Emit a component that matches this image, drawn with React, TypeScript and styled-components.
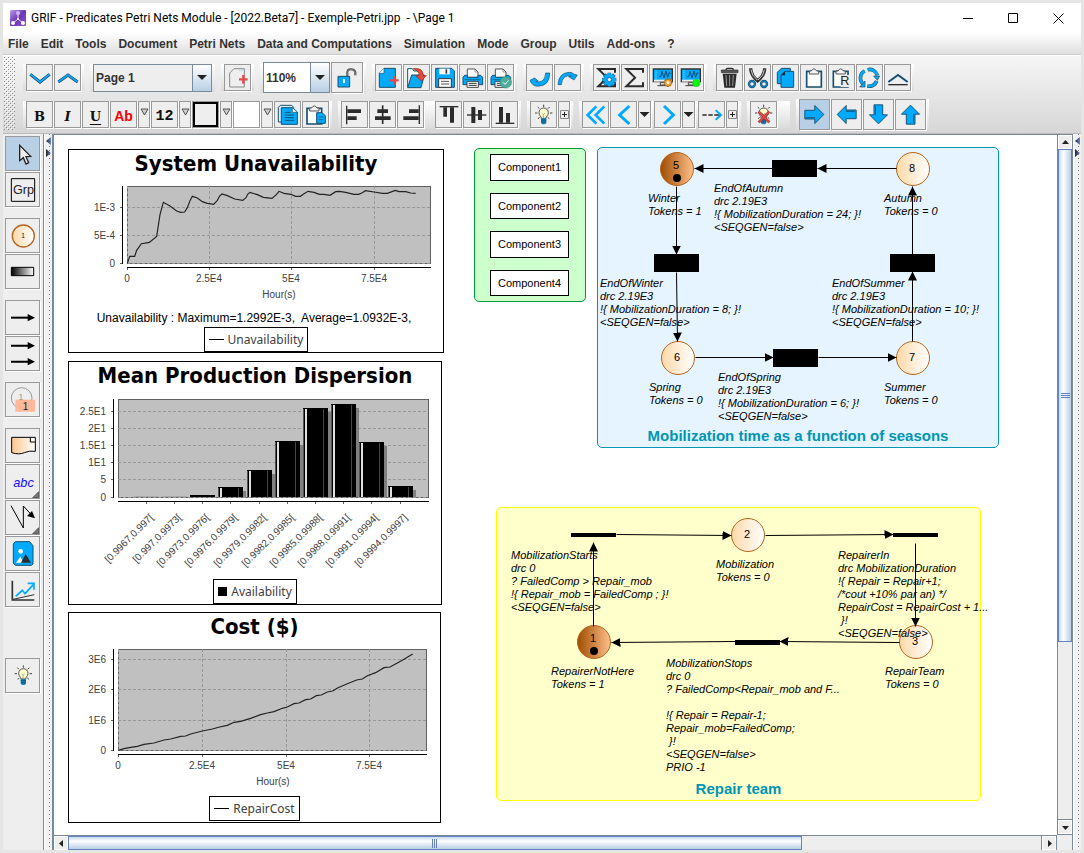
import React from "react";
import styled, { createGlobalStyle } from "styled-components";

const SANS = `"Liberation Sans", Arial, sans-serif`;
const BLUE = "#00aaff";
const INK = "#2b2b2b";
const NAVY = "#17506e";

const GlobalStyle = createGlobalStyle`
  *, *::before, *::after { box-sizing: border-box; }
  body { margin: 0; font-family: ${SANS}; font-size: 12px; color: #333; }
  button, select, input { font: inherit; color: inherit; }
  h1, h2, p { margin: 0; }
`;

/* ---------- window frame ---------- */

const Frame = styled.div`
  display: flex;
  flex-direction: column;
  height: 100vh;
  min-height: 600px;
  border: 3px solid #e5e5e5;
  background: #eee;
  overflow: hidden;
`;

const TitleBar = styled.header`
  display: flex;
  align-items: center;
  gap: 4px;
  height: 30px;
  padding-left: 7px;
  background: #fff;
  color: #000;
`;

const WindowTitle = styled.h1`
  flex: 1;
  font: 12px Roboto, "Noto Sans", sans-serif;
  white-space: pre;
`;

const WindowButtons = styled.div`
  display: flex;
`;

const WindowButton = styled.button`
  display: grid;
  place-items: center;
  width: 45px;
  height: 28px;
  padding: 0;
  border: 0;
  background: none;
`;

const MenuBar = styled.nav`
  display: flex;
  align-items: center;
  gap: 12px;
  height: 22px;
  padding: 0 5px;
  background: linear-gradient(#fff, #dedede);
  border-bottom: 1px solid #ccc;
`;

const MenuItem = styled.button`
  padding: 0;
  border: 0;
  background: none;
  font-weight: bold;
  white-space: nowrap;
`;

/* ---------- toolbars ---------- */

const ToolArea = styled.section`
  display: flex;
  gap: 8px;
  height: 79px;
  padding: 1px 0 3px 1px;
  background: linear-gradient(#f6f6f6, #d6d6d6);
  border-top: 1px solid #fff;
  border-bottom: 1px solid #bbb;
`;

const GripSvg = styled.svg`
  flex: none;
  width: 11px;
  height: 100%;
`;

const Grip = () => (
  <GripSvg aria-hidden="true">
    <pattern id="grip" width="4" height="4" patternUnits="userSpaceOnUse">
      <path d="M0 0h1v1H0zM2 2h1v1H2z" fill="#8b8b8b" />
      <path d="M1 1h1v1H1zM3 3h1v1H3z" fill="#fff" />
    </pattern>
    <rect width="100%" height="100%" fill="url(#grip)" />
  </GripSvg>
);

const ToolRows = styled.div`
  display: flex;
  flex-direction: column;
  gap: 6px;
  padding-top: 5px;
`;

const ToolRow = styled.div`
  display: flex;
  align-items: center;
  gap: 6px;
  height: 31px;
`;

const Group = styled.div<{ $tail?: number }>`
  display: flex;
  align-items: center;
  gap: 1px;
  padding: 0 ${(p) => p.$tail ?? 3}px 0 3px;
  background: linear-gradient(#fff, #dcdcdc);
`;

const Space = styled.span<{ $w: number }>`
  width: ${(p) => p.$w}px;
`;

const ToolButton = styled.button<{ $w?: number; $h?: number; $on?: boolean }>`
  display: grid;
  place-items: center;
  flex: none;
  width: ${(p) => p.$w ?? 27}px;
  height: ${(p) => p.$h ?? 27}px;
  padding: 0;
  overflow: hidden;
  border: 1px solid #999;
  background: ${(p) => (p.$on ? "#b8cfe5" : "#eee")};
  box-shadow: 1px 1px 0 #fff;
`;

const Letter = styled.span<{ $kind?: "serif" | "i" | "u" | "red" }>`
  padding-top: 3px;
  font: bold 15px "Liberation Mono", monospace;
  color: #111;
  ${(p) => p.$kind && p.$kind !== "red" && `font: bold 13px "DejaVu Serif", serif;`}
  ${(p) => p.$kind === "i" && "font-style: italic;"}
  ${(p) => p.$kind === "u" && "text-decoration: underline; text-underline-offset: 3px;"}
  ${(p) => p.$kind === "red" && `color: #f00; font-family: ${SANS}; font-size: 14px;`}
`;

const Swatch = styled.span<{ $outlined?: boolean }>`
  width: 25px;
  height: 25px;
  background: ${(p) => (p.$outlined ? "#eee" : "#fff")};
  border: ${(p) => (p.$outlined ? "2px solid #000" : "0")};
`;

const Combo = styled.div<{ $w: number; $h: number; $white?: boolean }>`
  display: flex;
  width: ${(p) => p.$w}px;
  height: ${(p) => p.$h}px;
  border: 1px solid #7a8a99;
  background: ${(p) => (p.$white ? "#fff" : "#eee")};
`;

const ComboSelect = styled.select`
  flex: 1;
  min-width: 0;
  padding: 0 2px;
  border: 0;
  appearance: none;
  background: none;
  font-weight: bold;
`;

const ComboInput = styled.input`
  flex: 1;
  min-width: 0;
  padding: 0 2px;
  border: 0;
  background: none;
  font-weight: bold;
`;

const ComboArrow = styled.span`
  display: grid;
  place-items: center;
  width: 19px;
  border-left: 1px solid #7a8a99;
  background: linear-gradient(#fff, #b8cfe5);
  pointer-events: none;
`;

const Triangle = styled.span`
  width: 10px;
  height: 5px;
  clip-path: polygon(0 0, 100% 0, 50% 100%);
  background: #222;
`;

const LightDrop = styled(ToolButton)`
  padding-bottom: 6px;
`;

/* ---------- workspace ---------- */

const Workspace = styled.main`
  display: flex;
  flex: 1;
  min-height: 0;
`;

const Palette = styled.aside`
  display: flex;
  flex-direction: column;
  gap: 11px;
  width: 41px;
  padding: 2px 0 0 2px;
  border-right: 1px solid #7a8a99;
`;

const PaletteGroup = styled.div<{ $apart?: boolean }>`
  display: flex;
  flex-direction: column;
  gap: 1px;
  margin-top: ${(p) => (p.$apart ? 40 : 0)}px;
`;

const Divider = styled.div`
  display: flex;
  flex-direction: column;
  align-items: center;
  gap: 4px;
  width: 8px;
  padding-top: 3px;
  background-color: #f2f2f2;
  background-image: linear-gradient(transparent 1px, #f2f2f2 1px),
    linear-gradient(90deg, transparent 4px, #777 4px, #777 5px, transparent 5px);
  background-size: 8px 4px;
  border-left: 1px solid #fff;
`;

const DividerArrow = styled.button<{ $right?: boolean }>`
  width: 5px;
  height: 8px;
  padding: 0;
  border: 0;
  background: linear-gradient(90deg, #222, #6b87d6);
  clip-path: ${(p) => (p.$right ? "polygon(0 0, 100% 50%, 0 100%)" : "polygon(100% 0, 0 50%, 100% 100%)")};
`;

const ScrollPane = styled.section`
  display: grid;
  grid-template: minmax(0, 1fr) 15px / minmax(0, 1fr) 15px;
  flex: 1;
  min-width: 0;
  border: solid #7a8a99;
  border-width: 1px 1px 0 2px;
`;

const Canvas = styled.div`
  position: relative;
  overflow: hidden;
  background: #fff;
  color: #000;
`;

const ScrollBar = styled.div<{ $vertical?: boolean }>`
  display: flex;
  flex-direction: ${(p) => (p.$vertical ? "column" : "row")};
  border: solid #7a8a99;
  border-width: ${(p) => (p.$vertical ? "0 0 1px 1px" : "1px 1px 0 0")};
  background: #eee;
`;

const ScrollButton = styled.button`
  display: grid;
  place-items: center;
  flex: none;
  width: 14px;
  height: 14px;
  padding: 0;
  border: 1px solid #fff;
  background: #eee;
`;

const ScrollTrack = styled.div<{ $vertical?: boolean }>`
  display: flex;
  flex-direction: ${(p) => (p.$vertical ? "column" : "row")};
  flex: 1;
  border: solid #7a8a99;
  border-width: ${(p) => (p.$vertical ? "0 0 1px" : "0 1px 0 0")};
`;

const Thumb = styled.div<{ $vertical?: boolean; $shown: number; $total: number }>`
  display: grid;
  place-items: center;
  flex: 0 0 calc(100% * ${(p) => p.$shown} / ${(p) => p.$total});
  border: 1px solid #6382bf;
  background: linear-gradient(${(p) => (p.$vertical ? "90deg" : "180deg")}, #c6d9ec, #fff 35%, #b8cfe5);
`;

const Corner = styled.div`
  background: #eee;
`;

/* ---------- things placed on the canvas ---------- */

type Spot = { $x: number; $y: number };

const ChartPanel = styled.figure<Spot & { $w: number }>`
  position: absolute;
  left: ${(p) => p.$x}px;
  top: ${(p) => p.$y}px;
  width: ${(p) => p.$w}px;
  display: flex;
  flex-direction: column;
  align-items: center;
  margin: 0;
  border: 1px solid #000;
  background: #fff;
`;

const ChartTitle = styled.h2`
  font: bold 22px/28px "DejaVu Sans Condensed", "Noto Sans", sans-serif;
`;

const ChartSvg = styled.svg`
  display: block;
  width: 100%;
  font-family: ${SANS};
  font-size: 10px;
  fill: #404040;
`;

const ChartNote = styled.p`
  padding-right: 4px;
  font-size: 12px;
  line-height: 17px;
  white-space: pre;
`;

const Legend = styled.figcaption<{ $lift?: boolean }>`
  display: flex;
  align-items: center;
  gap: 4px;
  height: 25px;
  padding: 0 4px;
  margin-bottom: ${(p) => (p.$lift ? 1 : 0)}px;
  border: 1px solid #000;
  font: 12px "Noto Sans", sans-serif;
  color: #404040;
`;

const LegendLine = styled.span`
  width: 15px;
  height: 1px;
  background: #000;
`;

const LegendSquare = styled.span`
  width: 9px;
  height: 9px;
  background: #000;
`;

const Zone = styled.div<Spot & { $w: number; $h: number; $fill: string; $line: string }>`
  position: absolute;
  left: ${(p) => p.$x}px;
  top: ${(p) => p.$y}px;
  width: ${(p) => p.$w}px;
  height: ${(p) => p.$h}px;
  display: flex;
  flex-direction: column;
  align-items: center;
  justify-content: flex-end;
  border: 1px solid ${(p) => p.$line};
  border-radius: 5px;
  background: ${(p) => p.$fill};
`;

const ComponentList = styled(Zone)`
  align-items: flex-start;
  justify-content: flex-start;
  gap: 12px;
  padding: 5px 15px;
`;

const ZoneTitle = styled.h2`
  font: bold 15px/22px ${SANS};
  color: #0096b4;
  white-space: nowrap;
`;

const ComponentBox = styled.div`
  display: grid;
  place-items: center;
  width: 79px;
  height: 27px;
  border: 1px solid #000;
  background: #fff;
  font-size: 11px;
`;

const NetSvg = styled.svg`
  position: absolute;
  inset: 0;
  width: 100%;
  height: 100%;
  font-family: ${SANS};
  font-size: 11px;
`;

const Caption = styled.div<Spot>`
  position: absolute;
  left: ${(p) => p.$x}px;
  top: ${(p) => p.$y}px;
  font-size: 11px;
  font-style: italic;
  line-height: 13px;
  white-space: pre;
`;

/* ---------- icons ---------- */

const Icon = ({ size = 25, children }: { size?: number; children: React.ReactNode }) => (
  <svg width={size} height={size} viewBox={`3 3 ${size * 3} ${size * 3}`} fill="none" aria-hidden="true">
    {children}
  </svg>
);

const chevron = (d: string) => (
  <Icon>
    <path d={d} stroke="#333" strokeWidth="9" />
    <path d={d} stroke={BLUE} strokeWidth="6" />
  </Icon>
);
const Plus = ({ x, y }: { x: number; y: number }) => (
  <path d={`M${x} ${y - 13}V${y + 13}M${x - 13} ${y}H${x + 13}`} stroke="#e5484d" strokeWidth="7" />
);
const Board = ({ x = 0 }: { x?: number }) => (
  <g transform={`translate(${x} 0)`}>
    <path d="M20 22h44v47H20z" fill="#fff" stroke={NAVY} strokeWidth="5" />
    <path d="M28 30v-9h6q8-13 16 0h6v9z" fill="#f4f4f4" stroke="#555" strokeWidth="3" />
  </g>
);
const Bulb = ({ dx = 0, dy = 0 }: { dx?: number; dy?: number }) => (
  <g transform={`translate(${dx} ${dy})`}>
    <path d="M41 11v7M23 18l5 5M59 18l-5 5M15 36h7M60 36h7M24 53l5-4M58 53l-5-4" stroke="#444" strokeWidth="3" />
    <path d="M34 52c0-7-7-8-7-17a14 14 0 0 1 28 0c0 9-7 10-7 17z" fill="#ffffcc" stroke="#555" strokeWidth="3" />
    <path d="M36 37l4 4 5-4M40 41v10" stroke="#886" strokeWidth="2" />
    <path d="M33 52h16v14l-4 4h-8l-4-4z" fill="#1784b5" />
    <path d="M33 57h16M34 63h14" stroke="#0a3d5c" strokeWidth="2" />
  </g>
);
const Printer = () => (
  <>
    <path d="M25 15h23l9 9v16H25z" fill="#fff" stroke="#555" strokeWidth="3" />
    <path d="M48 15v9h9" stroke="#666" strokeWidth="2" />
    <path d="M17 34h8v6h32v-6h8l6 6v22H12V40z" fill={BLUE} stroke={NAVY} strokeWidth="3" />
    <path d="M17 47h48" stroke={NAVY} strokeWidth="2" />
    <path d="M24 52h34v18H24z" fill="#fff" stroke="#444" strokeWidth="3" />
    <path d="M29 58h24M29 64h24" stroke="#333" strokeWidth="3" />
  </>
);
const Screen = () => (
  <>
    <path d="M13 15h57v38H13z" fill={BLUE} stroke="#333" strokeWidth="4" />
    <path d="M15 47h53v6H15z" fill="#eee" />
    <path d="M21 19v26" stroke="#fff" strokeWidth="2" strokeDasharray="3 3" />
    <path d="M30 38h5l4-16 6 20 6-21 5 19 5-15 3 5" stroke="#0b4c74" strokeWidth="3" />
    <path d="M34 55h15v8H34zM25 65h30" fill="#ddd" stroke="#444" strokeWidth="3" />
  </>
);
const sigma = "M66 26V15H16L42 41 16 67H66V55";
const gearRays = (cx: number, cy: number, r: number) =>
  [0, 45, 90, 135].map((a) => {
    const c = Math.round(Math.cos((a * Math.PI) / 180) * r);
    const s = Math.round(Math.sin((a * Math.PI) / 180) * r);
    return `M${cx - c} ${cy - s}L${cx + c} ${cy + s}`;
  }).join("");

const icons = {
  down: chevron("M13 31L42 54 71 31"),
  up: chevron("M13 54L42 33 71 54"),
  addPage: (
    <Icon>
      <path d="M30 14h31v55H17V27z" fill="#eee" stroke="#888" strokeWidth="3" />
      <path d="M45 19h16" stroke="#9cdcff" strokeWidth="3" strokeDasharray="5 2" />
      <Plus x={58} y={46} />
    </Icon>
  ),
  lock: (
    <Icon size={29}>
      <path d="M46 44V32q0-10 11-10t13 9v9" stroke="#444" strokeWidth="6" />
      <path d="M46 44V32q0-10 11-10t13 9v9" stroke="#999" strokeWidth="2" />
      <path d="M18 43h35v32H18z" fill={BLUE} stroke={NAVY} strokeWidth="3" />
      <path d="M36 52v11" stroke="#fff" strokeWidth="6" />
    </Icon>
  ),
  newDoc: (
    <Icon>
      <path d="M27 13h34v57H13V28z" fill={BLUE} stroke={NAVY} strokeWidth="3" />
      <path d="M13 28h14V13" fill="#fff" stroke={NAVY} strokeWidth="2" />
      <Plus x={58} y={49} />
    </Icon>
  ),
  open: (
    <Icon>
      <path d="M14 70V14h14l5 7h19v12" fill="#fff" stroke={NAVY} strokeWidth="3" />
      <path d="M14 71l12-38h38L54 71z" fill={BLUE} stroke={NAVY} strokeWidth="3" />
      <path d="M31 14q31-4 29 21h10L55 51 38 35h10q2-14-17-21z" fill="#e8493c" stroke="#8c2a22" strokeWidth="2" />
    </Icon>
  ),
  save: (
    <Icon>
      <path d="M14 13h48l8 8v49H14z" fill={BLUE} stroke={NAVY} strokeWidth="3" />
      <path d="M25 14h31v17H25z" fill="#fff" />
      <path d="M46 16v13" stroke="#333" strokeWidth="5" />
      <path d="M23 44h38v26H23z" fill="#fff" stroke="#333" strokeWidth="3" />
      <path d="M30 52h24M30 60h24" stroke="#555" strokeWidth="3" />
    </Icon>
  ),
  print: <Icon><Printer /></Icon>,
  printCheck: (
    <Icon>
      <Printer />
      <circle cx="56" cy="55" r="17" fill="#4fae9a" stroke="#397" strokeWidth="2" />
      <path d="M48 55l6 6 11-12" stroke="#fff" strokeWidth="3" />
    </Icon>
  ),
  undo: (
    <Icon>
      <path d="M12 49l14-7 11 9-8 2q28 6 30-26h12q0 40-37 40-16-1-22-18z" fill={BLUE} stroke={NAVY} strokeWidth="2" />
    </Icon>
  ),
  redo: (
    <Icon>
      <path d="M12 62q2-36 35-37 8 0 13 6l10 2-10 15-16-10 8-2q-27-5-30 26z" fill={BLUE} stroke={NAVY} strokeWidth="2" />
    </Icon>
  ),
  sigmaGear: (
    <Icon>
      <path d={sigma} stroke={INK} strokeWidth="6" />
      <path d={gearRays(49, 47, 21)} stroke={NAVY} strokeWidth="11" />
      <circle cx="49" cy="47" r="16" fill={BLUE} />
      <path d={gearRays(49, 47, 20)} stroke={BLUE} strokeWidth="8" />
      <circle cx="49" cy="47" r="6" fill="#fff" stroke={NAVY} strokeWidth="2" />
    </Icon>
  ),
  sigma: (
    <Icon>
      <path d={sigma} stroke={INK} strokeWidth="6" />
    </Icon>
  ),
  screenGear: (
    <Icon>
      <Screen />
      <path d={gearRays(57, 56, 13)} stroke="#a66d1a" strokeWidth="7" />
      <circle cx="57" cy="56" r="9" fill="#f3a53a" />
      <circle cx="57" cy="56" r="4" fill="#fff" />
    </Icon>
  ),
  screenRun: (
    <Icon>
      <Screen />
      <circle cx="58" cy="57" r="11" fill="#0f0" stroke="#2bbb2b" strokeWidth="2" />
    </Icon>
  ),
  trash: (
    <Icon>
      <path d="M30 18q0-5 5-5h12q5 0 5 5" stroke={INK} strokeWidth="4" />
      <path d="M16 18h50v8H16z" fill="#555" stroke={INK} strokeWidth="2" />
      <path d="M20 29h42l-5 42H25z" fill={INK} />
      <path d="M30 33l2 33M41 33v33M52 33l-2 33" stroke="#999" strokeWidth="3" />
    </Icon>
  ),
  cut: (
    <Icon>
      <path d="M20 13q0 22 24 40M62 13q0 22-24 40" stroke="#333" strokeWidth="10" />
      <path d="M21 17q1 17 19 31M61 17q-1 17-19 31" stroke="#ccc" strokeWidth="3" />
      <circle cx="24" cy="60" r="9" stroke={NAVY} strokeWidth="7" />
      <circle cx="60" cy="60" r="9" stroke={NAVY} strokeWidth="7" />
      <circle cx="24" cy="60" r="9" stroke={BLUE} strokeWidth="2" />
      <circle cx="60" cy="60" r="9" stroke={BLUE} strokeWidth="2" />
    </Icon>
  ),
  copy: (
    <Icon>
      <path d="M28 13h27v46H16V25z" fill={BLUE} stroke={NAVY} strokeWidth="3" />
      <path d="M39 22h26v48H27V34z" fill={BLUE} stroke={NAVY} strokeWidth="3" />
      <path d="M27 34h12V22" fill={INK} />
    </Icon>
  ),
  paste: <Icon><Board /></Icon>,
  pasteR: (
    <Icon>
      <Board x={-4} />
      <path d="M38 33h28v36H38z" fill="#eee" />
      <text x="37" y="64" fontSize="38" fill="#222" fontFamily="Liberation Sans">R</text>
    </Icon>
  ),
  cycle: (
    <Icon>
      <path d="M24 62A24 24 0 0 1 26 21M35 17A24 24 0 0 1 64 34M62 51A24 24 0 0 1 34 66" stroke="#245" strokeWidth="11" />
      <path d="M24 62A24 24 0 0 1 26 21M35 17A24 24 0 0 1 64 34M62 51A24 24 0 0 1 34 66" stroke={BLUE} strokeWidth="8" />
      <path d="M27 51v18H11zM53 36h18l-7 13z" fill={BLUE} stroke="#245" strokeWidth="2" />
    </Icon>
  ),
  collapse: (
    <Icon>
      <path d="M13 54L42 33 71 54" stroke={NAVY} strokeWidth="6" />
      <path d="M13 62h58" stroke={INK} strokeWidth="4" />
    </Icon>
  ),
  copyDoc: (
    <Icon>
      <path d="M19 13h34l6 6v44H13V19z" fill="#d8f0ff" stroke={NAVY} strokeWidth="3" />
      <path d="M22 20h34l14 13v37H22z" fill={BLUE} stroke={NAVY} strokeWidth="3" />
      <path d="M55 21v13h14" fill="#fff" stroke={NAVY} strokeWidth="2" />
      <path d="M32 34h18M32 42h28M32 50h28M32 58h28" stroke={NAVY} strokeWidth="3" />
    </Icon>
  ),
  pasteDoc: (
    <Icon>
      <Board x={-5} />
      <path d="M44 35h16l10 9v23H44z" fill={BLUE} stroke={NAVY} strokeWidth="3" />
      <path d="M50 48h14M50 56h14" stroke={NAVY} strokeWidth="2" />
    </Icon>
  ),
  left: <Icon><path d="M17 14v56" stroke={INK} strokeWidth="4" /><path d="M19 25h41v11H19zM19 46h28v11H19z" fill={INK} /></Icon>,
  center: <Icon><path d="M41 13v56" stroke={INK} strokeWidth="5" /><path d="M25 25h32v11H25zM18 46h47v11H18z" fill={INK} /></Icon>,
  right: <Icon><path d="M67 13v56" stroke={INK} strokeWidth="4" /><path d="M36 25h29v11H36zM19 46h46v11H19z" fill={INK} /></Icon>,
  top: <Icon><path d="M14 17h56" stroke={INK} strokeWidth="4" /><path d="M25 19h11v28H25zM45 19h12v46H45z" fill={INK} /></Icon>,
  middle: <Icon><path d="M12 42h58" stroke={INK} strokeWidth="4" /><path d="M25 18h12v48H25zM45 27h12v30H45z" fill={INK} /></Icon>,
  bottom: <Icon><path d="M14 67h56" stroke={INK} strokeWidth="4" /><path d="M24 18h12v47H24zM45 36h12v29H45z" fill={INK} /></Icon>,
  bulb: <Icon><Bulb /></Icon>,
  bulbOff: (
    <Icon>
      <Bulb />
      <path d="M26 32l32 32M58 32L26 64" stroke="#8c2a22" strokeWidth="8" />
      <path d="M26 32l32 32M58 32L26 64" stroke="#ee4444" strokeWidth="5" />
    </Icon>
  ),
  first: <Icon><path d="M43 16L17 42l26 26M67 16L41 42l26 26" stroke={BLUE} strokeWidth="8" /></Icon>,
  prev: <Icon><path d="M58 15L29 42l29 27" stroke={BLUE} strokeWidth="9" /></Icon>,
  next: <Icon><path d="M30 15l28 27-28 27" stroke={BLUE} strokeWidth="9" /></Icon>,
  dashNext: (
    <Icon>
      <path d="M13 42h13M31 42h13M49 42h18" stroke={INK} strokeWidth="5" />
      <path d="M53 28l16 14-16 14" stroke={BLUE} strokeWidth="6" />
    </Icon>
  ),
};

const bigArrow = "M18 35h31V20l28 28-28 28V62H18z";
const BigArrow = ({ turn }: { turn: number }) => (
  <svg width="29" height="29" viewBox="3 3 90 90" aria-hidden="true">
    <g transform={`rotate(${turn} 48 48)`}>
      <path d={bigArrow} fill={BLUE} stroke={NAVY} strokeWidth="3" />
      <path d="M22 58h28" stroke={NAVY} strokeWidth="3" />
    </g>
  </svg>
);

const PlusBox = () => (
  <svg width="9" height="9" viewBox="0 0 9 9" fill="none" stroke="#222" aria-hidden="true">
    <path d="M.5.5h8v8h-8z" stroke="#888" />
    <path d="M4.500 2v5M2 4.500h5" />
  </svg>
);

const Flyout = () => <path d="M101 83v18H83z" fill="#777" stroke="#333" strokeWidth="2" />;

const palette = {
  pointer: (
    <Icon size={33}>
      <path d="M44 28v46l11-9 8 19 8-4-8-18 14-1z" fill="#eee" stroke="#222" strokeWidth="4" />
    </Icon>
  ),
  group: (
    <Icon size={33}>
      <path d="M19 20h70v68H19z" stroke="#000" strokeWidth="3" />
      <text x="24" y="67" fontSize="38" fill="#222" fontFamily="Liberation Sans">Grp</text>
    </Icon>
  ),
  place: (
    <Icon size={33}>
      <circle cx="55" cy="54" r="33" fill="url(#placeLight)" stroke="#b5651d" strokeWidth="4" />
      <text x="49" y="61" fontSize="20" fill="#222" fontFamily="Liberation Sans">1</text>
    </Icon>
  ),
  transition: <Icon size={33}><path d="M19 40h67v25H19z" fill="url(#blackFade)" stroke="#000" strokeWidth="3" /></Icon>,
  arc: <Icon size={33}><path d="M18 53h55" stroke="#000" strokeWidth="6" /><path d="M68 42l22 11-22 11z" fill="#000" /></Icon>,
  arcs: (
    <Icon size={33}>
      <path d="M18 29h55M18 77h55" stroke="#000" strokeWidth="6" />
      <path d="M68 18l22 11-22 11zM68 66l22 11-22 11z" fill="#000" />
    </Icon>
  ),
  repeat: (
    <Icon size={33}>
      <circle cx="50" cy="48" r="31" stroke="#999" strokeWidth="3" />
      <text x="40" y="55" fontSize="28" fill="#999" fontFamily="Liberation Sans">1</text>
      <path d="M31 53h59v36H31z" fill="#ffb899" />
      <text x="53" y="83" fontSize="30" fill="#222" fontFamily="Liberation Sans">1</text>
    </Icon>
  ),
  note: (
    <Icon size={33}>
      <path d="M20 28h71v42q-18-3-33 4t-38 0z" fill="url(#noteFade)" stroke="#000" strokeWidth="3" />
      <path d="M76 29v13h14" fill="#fff" stroke="#000" strokeWidth="3" />
    </Icon>
  ),
  text: (
    <Icon size={33}>
      <text x="25" y="69" fontSize="38" fontStyle="italic" fill="#11f" fontFamily="Liberation Sans">abc</text>
      <Flyout />
    </Icon>
  ),
  line: (
    <Icon size={33}>
      <path d="M18 17l37 67V18l24 26" stroke="#000" strokeWidth="3" />
      <path d="M90 55l-24-7 15-15z" fill="#000" />
      <Flyout />
    </Icon>
  ),
  image: (
    <Icon size={33}>
      <path d="M31 17h43l10 12v55l-5 4H31l-6-7V24z" fill={BLUE} stroke={NAVY} strokeWidth="3" />
      <circle cx="47" cy="46" r="7" fill="#fff" />
      <path d="M33 80l13-18 10 18z" fill="#fff" />
      <path d="M48 80l14-26 16 26z" fill={INK} />
    </Icon>
  ),
  chart: (
    <Icon size={33}>
      <path d="M22 26v58h66" stroke="#333" strokeWidth="5" />
      <path d="M24 82l64-14" stroke="#333" strokeWidth="3" />
      <path d="M32 73l20-18 8 10 25-27" stroke={BLUE} strokeWidth="5" />
      <path d="M68 34h19v19" stroke={BLUE} strokeWidth="5" />
    </Icon>
  ),
  bulb: <Icon size={33}><Bulb dx={14} dy={11} /></Icon>,
};

/* ---------- charts ---------- */

const Plot = ({ x, y, w, h, rows, cols }: { x: number; y: number; w: number; h: number; rows: [number, string][]; cols: [number, string][] }) => (
  <>
    <rect x={x + 0.5} y={y + 0.5} width={w} height={h} fill="#c0c0c0" stroke="#606060" />
    <path
      d={rows.map(([v]) => `M${x} ${v + 0.5}h${w}`).join("") + cols.filter(([, t]) => t).map(([v]) => `M${v + 0.5} ${y}v${h}`).join("")}
      stroke="#989898"
      strokeDasharray="3 2"
    />
    <path d={`M${x - 4.500} ${y}v${h + 1}M${x} ${y + h + 4.500}h${w + 1}`} stroke="#000" />
    <path
      d={rows.map(([v]) => `M${x - 7} ${v + 0.5}h2`).join("") + cols.map(([v]) => `M${v + 0.5} ${y + h + 5}v2`).join("")}
      stroke="#666"
    />
    {rows.map(([v, t]) => (
      <text key={t} x={x - 12} y={v + 4} textAnchor="end">{t}</text>
    ))}
    {cols.map(([v, t]) => (
      <text key={v} x={v} y={y + h + 19} textAnchor="middle">{t}</text>
    ))}
  </>
);

const unavailability =
  "190,371 197,349 212,349 218,331 232,311 256,307 278,289 288,224 298,187 318,198 338,213 350,217 362,216 370,203 378,182 385,169 400,174 415,185 430,190 449,193 460,181 467,168 474,162 490,167 512,177 536,181 546,173 551,163 558,157 580,164 598,172 624,175 637,164 645,154 660,160 680,163 695,169 709,169 720,161 732,154 750,157 766,163 780,163 798,166 815,155 826,154 845,157 870,163 884,163 895,158 904,152 930,156 955,160 970,160 994,151 1005,155 1025,155 1040,159 1055,160";
const cost =
  "163,451 180,446 200,442 220,439 240,433 270,429 300,420 320,417 350,409 365,408 380,402 415,393 445,387 467,381 490,376 510,367 530,364 560,355 590,344 610,339 630,335 655,325 670,321 690,311 705,309 725,299 740,297 757,287 772,285 790,276 806,273 822,263 850,251 878,240 895,237 910,227 935,218 960,203 978,201 1000,189 1020,178 1046,162";

const bars: [number, number, string][] = [
  [146, 496, "[0.9967,0.997["],
  [174, 496, "[0.997,0.9973["],
  [202, 495, "[0.9973,0.9976["],
  [230, 487, "[0.9976,0.9979["],
  [259, 470, "[0.9979,0.9982["],
  [287, 441, "[0.9982,0.9985["],
  [315, 408, "[0.9985,0.9988["],
  [343, 404, "[0.9988,0.9991["],
  [371, 442, "[0.9991,0.9994["],
  [400, 486, "[0.9994,0.9997]"],
];

const Charts = () => (
  <>
    <ChartPanel $x={14} $y={14} $w={376}>
      <ChartTitle>System Unavailability</ChartTitle>
      <ChartSvg height="132" viewBox="69 178 374 132">
        <Plot x={127} y={186} w={303} h={77} rows={[[207, "1E-3"], [235, "5E-4"], [263, "0"]]} cols={[[127, "0"], [209, "2.5E4"], [291, "5E4"], [374, "7.5E4"]]} />
        <text x="279" y="298" textAnchor="middle">Hour(s)</text>
        <polyline points={unavailability} transform="translate(64 140) scale(.33333)" fill="none" stroke="#222" strokeWidth="3.500" />
      </ChartSvg>
      <ChartNote>Unavailability : Maximum=1.2992E-3,  Average=1.0932E-3,</ChartNote>
      <Legend><LegendLine />Unavailability</Legend>
    </ChartPanel>

    <ChartPanel $x={14} $y={226} $w={374}>
      <ChartTitle>Mean Production Dispersion</ChartTitle>
      <ChartSvg height="189" viewBox="69 390 372 189">
        <Plot x={118} y={399} w={310} h={98} rows={[[411, "2.5E1"], [428, "2E1"], [445, "1.5E1"], [462, "1E1"], [479, "5"], [497, "0"]]} cols={bars.map(([c]) => [c, ""] as [number, string])} />
        {bars.map(([c, top, label], i) => (
          <g key={label}>
            {i > 2 && <rect x={c - 8} y={top + 4} width="24" height={Math.max(497 - top - 4, 0)} fill="#808080" />}
            <rect x={c - 12} y={top} width="25" height={497 - top} fill={i < 2 ? "#aaa" : "#000"} />
            {i > 2 && (
              <>
                <rect x={c - 12} y={top + 1} width="1" height={496 - top} fill="#555" />
                <rect x={c - 10} y={top + 1} width="2" height={496 - top} fill="#e0e0e0" />
                <rect x={c + 8} y={top + 1} width="1" height={496 - top} fill="#444" />
              </>
            )}
            <text textAnchor="end" transform={`translate(${c + 8} 518) rotate(-45)`}>{label}</text>
          </g>
        ))}
      </ChartSvg>
      <Legend><LegendSquare />Availability</Legend>
    </ChartPanel>

    <ChartPanel $x={14} $y={477} $w={373}>
      <ChartTitle>Cost ($)</ChartTitle>
      <ChartSvg height="155" viewBox="69 641 371 155">
        <Plot x={118} y={649} w={308} h={101} rows={[[659, "3E6"], [689, "2E6"], [720, "1E6"], [750, "0"]]} cols={[[118, "0"], [202, "2.5E4"], [286, "5E4"], [369, "7.5E4"]]} />
        <text x="273" y="785" textAnchor="middle">Hour(s)</text>
        <polyline points={cost} transform="translate(64 600) scale(.33333)" fill="none" stroke="#222" strokeWidth="3.500" />
      </ChartSvg>
      <Legend $lift><LegendLine />RepairCost</Legend>
    </ChartPanel>
  </>
);

/* ---------- Petri net ---------- */

const places: { n: number; x: number; y: number; marked?: boolean }[] = [
  { n: 5, x: 623, y: 34, marked: true },
  { n: 8, x: 859, y: 34 },
  { n: 6, x: 624, y: 223 },
  { n: 7, x: 859, y: 223 },
  { n: 2, x: 694, y: 400 },
  { n: 1, x: 540, y: 507, marked: true },
  { n: 3, x: 862, y: 507 },
];

const transitions = [
  [718, 25, 45, 17],
  [600, 119, 45, 18],
  [719, 214, 45, 18],
  [836, 119, 45, 18],
  [517, 398, 45, 4],
  [839, 398, 45, 4],
  [681, 505, 45, 5],
];

const arcs = [
  [842, 33, 763, 33],
  [718, 33, 640, 33],
  [622, 51, 622, 119],
  [622, 137, 623, 206],
  [641, 222, 719, 222],
  [764, 222, 842, 222],
  [858, 206, 858, 136],
  [858, 119, 858, 51],
  [562, 399, 677, 400],
  [711, 400, 839, 399],
  [861, 408, 861, 491],
  [845, 507, 725, 506],
  [681, 506, 557, 507],
  [539, 491, 539, 407],
];

const captions: [number, number, string][] = [
  [594, 57, "Winter\nTokens = 1"],
  [660, 47, "EndOfAutumn\ndrc 2.19E3\n!{ MobilizationDuration = 24; }!\n<SEQGEN=false>"],
  [830, 57, "Autumn\nTokens = 0"],
  [546, 142, "EndOfWinter\ndrc 2.19E3\n!{ MobilizationDuration = 8; }!\n<SEQGEN=false>"],
  [778, 142, "EndOfSummer\ndrc 2.19E3\n!{ MobilizationDuration = 10; }!\n<SEQGEN=false>"],
  [595, 246, "Spring\nTokens = 0"],
  [664, 236, "EndOfSpring\ndrc 2.19E3\n!{ MobilizationDuration = 6; }!\n<SEQGEN=false>"],
  [830, 246, "Summer\nTokens = 0"],
  [457, 414, "MobilizationStarts\ndrc 0\n? FailedComp > Repair_mob\n!{ Repair_mob = FailedComp ; }!\n<SEQGEN=false>"],
  [662, 423, "Mobilization\nTokens = 0"],
  [784, 414, "RepairerIn\ndrc MobilizationDuration\n!{ Repair = Repair+1;\n/*cout +10% par an) */\nRepairCost = RepairCost + 1...\n }!\n<SEQGEN=false>"],
  [497, 530, "RepairerNotHere\nTokens = 1"],
  [831, 530, "RepairTeam\nTokens = 0"],
  [612, 522, "MobilizationStops\ndrc 0\n? FailedComp<Repair_mob and F...\n\n!{ Repair = Repair-1;\nRepair_mob=FailedComp;\n }!\n<SEQGEN=false>\nPRIO -1"],
];

const PetriNet = () => (
  <>
    <ComponentList $x={420} $y={13} $w={112} $h={154} $fill="#ccffcc" $line="#00993a">
      {[1, 2, 3, 4].map((n) => <ComponentBox key={n}>Component{n}</ComponentBox>)}
    </ComponentList>
    <Zone $x={543} $y={12} $w={402} $h={301} $fill="#e6f4ff" $line="#0096b4">
      <ZoneTitle>Mobilization time as a function of seasons</ZoneTitle>
    </Zone>
    <Zone $x={442} $y={372} $w={485} $h={294} $fill="#ffffcc" $line="#ffff00">
      <ZoneTitle>Repair team</ZoneTitle>
    </Zone>
    <NetSvg>
      <defs>
        <linearGradient id="placeLight"><stop stopColor="#ffd9a8" /><stop offset="1" stopColor="#fff" /></linearGradient>
        <linearGradient id="placeDark"><stop stopColor="#a04c00" /><stop offset="1" stopColor="#ffc08a" /></linearGradient>
        <linearGradient id="blackFade"><stop stopColor="#000" /><stop offset="1" stopColor="#fff" /></linearGradient>
        <linearGradient id="noteFade"><stop stopColor="#ffc68f" /><stop offset="1" stopColor="#fff" /></linearGradient>
        <marker id="head" viewBox="0 0 8 8" refX="8" refY="4" markerWidth="9" markerHeight="9" markerUnits="userSpaceOnUse" orient="auto">
          <path d="M0 0l8 4-8 4z" />
        </marker>
      </defs>
      {places.map((p) => (
        <g key={p.n}>
          <circle cx={p.x} cy={p.y} r="16.500" fill={p.marked ? "url(#placeDark)" : "url(#placeLight)"} stroke="#b5651d" />
          {p.marked && <circle cx={p.x} cy={p.y + 9} r="4" />}
          <text x={p.x - 1} y={p.marked ? p.y : p.y + 3} textAnchor="middle">{p.n}</text>
        </g>
      ))}
      {transitions.map(([x, y, w, h]) => <rect key={`${x}-${y}`} x={x} y={y} width={w} height={h} />)}
      {arcs.map(([x1, y1, x2, y2]) => (
        <line key={`${x1}-${y1}`} x1={x1 + 0.5} y1={y1 + 0.5} x2={x2 + 0.5} y2={y2 + 0.5} stroke="#000" markerEnd="url(#head)" />
      ))}
    </NetSvg>
    {captions.map(([x, y, text]) => <Caption key={`${x}-${y}`} $x={x} $y={y}>{text}</Caption>)}
  </>
);

/* ---------- page ---------- */

const Tool = ({ label, icon }: { label: string; icon: React.ReactNode }) => (
  <ToolButton aria-label={label} title={label}>{icon}</ToolButton>
);
const Pal = ({ label, icon, on }: { label: string; icon: React.ReactNode; on?: boolean }) => (
  <ToolButton $w={35} $h={35} $on={on} aria-label={label} title={label}>{icon}</ToolButton>
);
const Drop = ({ label }: { label: string }) => (
  <ToolButton $w={13} aria-label={label}><Triangle /></ToolButton>
);
const FormatDrop = ({ label }: { label: string }) => (
  <LightDrop $w={12} aria-label={label}>
    <svg width="9" height="8" viewBox="0 0 9 8" aria-hidden="true"><path d="M1 1h7L4.500 7z" fill="#ccc" stroke="#555" /></svg>
  </LightDrop>
);

const Arrow = ({ d }: { d: string }) => (
  <svg width="9" height="9" viewBox="0 0 9 9" aria-hidden="true"><path d={d} fill="#222" /></svg>
);

const menus = ["File", "Edit", "Tools", "Document", "Petri Nets", "Data and Computations", "Simulation", "Mode", "Group", "Utils", "Add-ons", "?"];

export default function App() {
  return (
    <>
      <GlobalStyle />
      <Frame>
        <TitleBar>
          <svg width="17" height="17" viewBox="0 0 17 17" aria-hidden="true">
            <defs>
              <linearGradient id="logo" x2="1" y2="1"><stop stopColor="#b9a2e6" /><stop offset=".5" stopColor="#6f35b8" /><stop offset="1" stopColor="#8d55cc" /></linearGradient>
            </defs>
            <rect width="16" height="16" rx="1" fill="url(#logo)" />
            <path d="M8 2v7M8 9l-5 4M8 9l5 4" stroke="#e6dcf5" fill="none" />
            <circle cx="8" cy="3" r="2" fill="#cdbbe8" /><circle cx="3" cy="13" r="2" fill="#fff" /><circle cx="13" cy="13" r="2" fill="#fff" /><circle cx="8" cy="9" r="1" fill="#fff" />
          </svg>
          <WindowTitle>{"GRIF - Predicates Petri Nets Module - [2022.Beta7] - Exemple-Petri.jpp  - \\Page 1"}</WindowTitle>
          <WindowButtons>
            <WindowButton aria-label="Minimize"><svg width="11" height="11"><path d="M0 5.500h10" stroke="#000" /></svg></WindowButton>
            <WindowButton aria-label="Maximize"><svg width="11" height="11"><path d="M.5.5h9v9h-9z" fill="none" stroke="#000" /></svg></WindowButton>
            <WindowButton aria-label="Close"><svg width="11" height="11"><path d="M.5.5l10 10M10.500.5l-10 10" stroke="#000" /></svg></WindowButton>
          </WindowButtons>
        </TitleBar>
        <MenuBar>{menus.map((m) => <MenuItem key={m}>{m}</MenuItem>)}</MenuBar>

        <ToolArea>
          <Grip />
          <ToolRows>
            <ToolRow>
              <Group><Tool label="Next page" icon={icons.down} /><Tool label="Previous page" icon={icons.up} /></Group>
              <Group>
                <Combo $w={119} $h={28}>
                  <ComboSelect aria-label="Page"><option>Page 1</option></ComboSelect>
                  <ComboArrow><Triangle /></ComboArrow>
                </Combo>
              </Group>
              <Group><Tool label="Add page" icon={icons.addPage} /></Group>
              <Group>
                <Combo $w={67} $h={31} $white>
                  <ComboInput aria-label="Zoom" defaultValue="110%" />
                  <ComboArrow><Triangle /></ComboArrow>
                </Combo>
                <ToolButton $w={32} $h={31} aria-label="Lock">{icons.lock}</ToolButton>
              </Group>
              <Group>
                <Tool label="New" icon={icons.newDoc} /><Tool label="Open" icon={icons.open} /><Tool label="Save" icon={icons.save} />
                <Tool label="Print" icon={icons.print} /><Tool label="Print options" icon={icons.printCheck} />
              </Group>
              <Group><Tool label="Undo" icon={icons.undo} /><Tool label="Redo" icon={icons.redo} /></Group>
              <Group>
                <Tool label="Computation settings" icon={icons.sigmaGear} /><Tool label="Compute" icon={icons.sigma} />
                <Tool label="Simulation settings" icon={icons.screenGear} /><Tool label="Run simulation" icon={icons.screenRun} />
              </Group>
              <Group>
                <Tool label="Delete" icon={icons.trash} /><Tool label="Cut" icon={icons.cut} /><Tool label="Copy" icon={icons.copy} />
                <Tool label="Paste" icon={icons.paste} /><Tool label="Paste with renaming" icon={icons.pasteR} />
                <Tool label="Refresh" icon={icons.cycle} /><Tool label="Collapse" icon={icons.collapse} />
              </Group>
            </ToolRow>
            <ToolRow>
              <Group>
                <Tool label="Bold" icon={<Letter $kind="serif">B</Letter>} />
                <Tool label="Italic" icon={<Letter $kind="i">I</Letter>} />
                <Tool label="Underline" icon={<Letter $kind="u">U</Letter>} />
                <Tool label="Text colour" icon={<Letter $kind="red">Ab</Letter>} />
                <FormatDrop label="Choose text colour" />
                <Tool label="Font size" icon={<Letter>12</Letter>} />
                <FormatDrop label="Choose font size" />
                <Tool label="Line colour" icon={<Swatch $outlined />} />
                <FormatDrop label="Choose line colour" />
                <Tool label="Fill colour" icon={<Swatch />} />
                <FormatDrop label="Choose fill colour" />
                <Tool label="Copy style" icon={icons.copyDoc} /><Tool label="Paste style" icon={icons.pasteDoc} />
              </Group>
              <Group>
                <Tool label="Align left" icon={icons.left} /><Tool label="Align centre" icon={icons.center} /><Tool label="Align right" icon={icons.right} />
                <Space $w={9} />
                <Tool label="Align top" icon={icons.top} /><Tool label="Align middle" icon={icons.middle} /><Tool label="Align bottom" icon={icons.bottom} />
              </Group>
              <Group>
                <Tool label="Highlight" icon={icons.bulb} />
                <ToolButton $w={12} aria-label="More highlights"><PlusBox /></ToolButton>
              </Group>
              <Group>
                <Tool label="First" icon={icons.first} /><Tool label="Previous" icon={icons.prev} /><Drop label="Previous steps" />
                <Space $w={1} />
                <Tool label="Next" icon={icons.next} /><Drop label="Next steps" />
                <Space $w={1} />
                <Tool label="Play" icon={icons.dashNext} />
                <ToolButton $w={12} aria-label="More play options"><PlusBox /></ToolButton>
              </Group>
              <Group $tail={13}><Tool label="Clear highlights" icon={icons.bulbOff} /></Group>
              <Group>
                <ToolButton $w={31} $h={31} $on aria-label="Right"><BigArrow turn={0} /></ToolButton>
                <ToolButton $w={31} $h={31} aria-label="Left"><BigArrow turn={180} /></ToolButton>
                <ToolButton $w={31} $h={31} aria-label="Down"><BigArrow turn={90} /></ToolButton>
                <ToolButton $w={31} $h={31} aria-label="Up"><BigArrow turn={270} /></ToolButton>
              </Group>
            </ToolRow>
          </ToolRows>
        </ToolArea>

        <Workspace>
          <Palette>
            <PaletteGroup><Pal on label="Select" icon={palette.pointer} /><Pal label="Group" icon={palette.group} /></PaletteGroup>
            <PaletteGroup><Pal label="Place" icon={palette.place} /><Pal label="Transition" icon={palette.transition} /></PaletteGroup>
            <PaletteGroup><Pal label="Arc" icon={palette.arc} /><Pal label="Arcs" icon={palette.arcs} /></PaletteGroup>
            <PaletteGroup><Pal label="Repeated place" icon={palette.repeat} /></PaletteGroup>
            <PaletteGroup>
              <Pal label="Comment" icon={palette.note} /><Pal label="Text" icon={palette.text} /><Pal label="Line" icon={palette.line} />
              <Pal label="Image" icon={palette.image} /><Pal label="Chart" icon={palette.chart} />
            </PaletteGroup>
            <PaletteGroup $apart><Pal label="Highlight" icon={palette.bulb} /></PaletteGroup>
          </Palette>
          <Divider><DividerArrow aria-label="Collapse left" /><DividerArrow $right aria-label="Expand left" /></Divider>
          <ScrollPane>
            <Canvas><Charts /><PetriNet /></Canvas>
            <ScrollBar $vertical>
              <ScrollButton aria-label="Scroll up"><Arrow d="M1 6h7L4.500 2z" /></ScrollButton>
              <ScrollTrack $vertical>
                <Thumb $vertical $shown={493} $total={670}><svg width="9" height="6"><path d="M0 .5h9M0 2.500h9M0 4.500h9" stroke="#6382bf" /></svg></Thumb>
              </ScrollTrack>
              <ScrollButton aria-label="Scroll down"><Arrow d="M1 3h7L4.500 7z" /></ScrollButton>
            </ScrollBar>
            <ScrollBar>
              <ScrollButton aria-label="Scroll left"><Arrow d="M6 1v7L2 4.500z" /></ScrollButton>
              <ScrollTrack>
                <Thumb $shown={733} $total={972}><svg width="6" height="9"><path d="M.5 0v9M2.500 0v9M4.500 0v9" stroke="#6382bf" /></svg></Thumb>
              </ScrollTrack>
              <ScrollButton aria-label="Scroll right"><Arrow d="M3 1v7l4-3.500z" /></ScrollButton>
            </ScrollBar>
            <Corner />
          </ScrollPane>
          <Divider><DividerArrow aria-label="Expand right" /><DividerArrow $right aria-label="Collapse right" /></Divider>
        </Workspace>
      </Frame>
    </>
  );
}
